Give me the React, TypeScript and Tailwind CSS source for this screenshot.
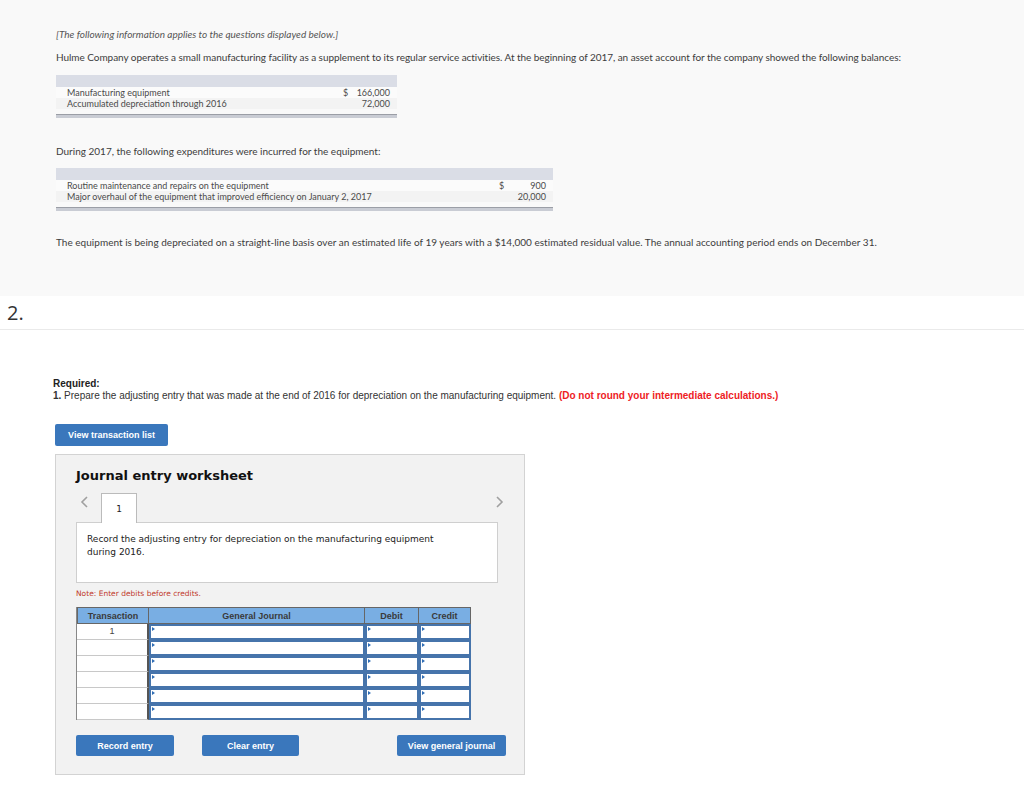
import React from "react";

type Row = { label: string; dollar?: boolean; amount: string };

function InfoTable({ rows, width }: { rows: Row[]; width: string }) {
  return (
    <div className={width}>
      <div className="h-[12px] bg-[#dadde6]" />
      {rows.map((r, i) => (
        <div
          key={r.label}
          className={`flex h-[11px] items-center pl-[11px] pr-[7px] text-[9px] leading-none text-[#4a4a4a] ${
            i % 2 === 0 ? "bg-[#fbfbfb]" : "bg-[#f3f3f3]"
          }`}
        >
          <span className="flex-1">{r.label}</span>
          <span className="w-[10px]">{r.dollar ? "$" : ""}</span>
          <span className="w-[37px] text-right">{r.amount}</span>
        </div>
      ))}
      <div className="mt-[5px] h-[4px] border-t border-[#9b9ea6] bg-[#c9ccd4]" />
    </div>
  );
}

function Tick() {
  return (
    <span className="absolute left-[1px] top-[1px] h-0 w-0 border-y-[2px] border-l-[3px] border-y-transparent border-l-[#2f6db5]" />
  );
}

function InputCell() {
  return (
    <div className="relative h-full border-2 border-[#4674ab] bg-white">
      <Tick />
    </div>
  );
}

function Chevron({ dir }: { dir: "left" | "right" }) {
  return (
    <svg width="9" height="12" viewBox="0 0 9 12" fill="none" stroke="#a0a0a0" strokeWidth="1.6">
      {dir === "left" ? <path d="M7 1 L2 6 L7 11" /> : <path d="M2 1 L7 6 L2 11" />}
    </svg>
  );
}

export default function App() {
  const rows = [1, 2, 3, 4, 5, 6];
  return (
    <div className="min-h-[797px] bg-white">
      <div className="h-[296px] bg-[#f9f9f9] px-[56px] pt-[28px] font-['Lato',sans-serif] text-[#3c3c3c]">
        <p className="text-[10px] italic leading-[12px] text-[#555]">
          [The following information applies to the questions displayed below.]
        </p>
        <p className="mt-[11px] text-[10px] leading-[12px] tracking-[-0.05px]">
          Hulme Company operates a small manufacturing facility as a supplement to its regular service activities. At the
          beginning of 2017, an asset account for the company showed the following balances:
        </p>
        <div className="mt-[12px]">
          <InfoTable
            width="w-[341px]"
            rows={[
              { label: "Manufacturing equipment", dollar: true, amount: "166,000" },
              { label: "Accumulated depreciation through 2016", amount: "72,000" },
            ]}
          />
        </div>
        <p className="mt-[27px] text-[10px] leading-[12px]">During 2017, the following expenditures were incurred for the equipment:</p>
        <div className="mt-[11px]">
          <InfoTable
            width="w-[497px]"
            rows={[
              { label: "Routine maintenance and repairs on the equipment", dollar: true, amount: "900" },
              { label: "Major overhaul of the equipment that improved efficiency on January 2, 2017", amount: "20,000" },
            ]}
          />
        </div>
        <p className="mt-[25px] text-[10px] leading-[12px] tracking-[0.02px]">
          The equipment is being depreciated on a straight-line basis over an estimated life of 19 years with a $14,000
          estimated residual value. The annual accounting period ends on December 31.
        </p>
      </div>

      <div className="flex h-[34px] items-center border-b border-[#eaeaea] pl-[7px] font-['Open_Sans',sans-serif] text-[20px] text-[#333]">
        2.
      </div>

      <div className="pl-[53px] pt-[48px] font-['Liberation_Sans',Arial,sans-serif] text-[10px] leading-[12px] text-[#333]">
        <p className="font-bold text-[#222]">Required:</p>
        <p>
          <span className="font-bold">1.</span> Prepare the adjusting entry that was made at the end of 2016 for depreciation
          on the manufacturing equipment.{" "}
          <span className="font-bold text-[#ee1c25]">(Do not round your intermediate calculations.)</span>
        </p>

        <button className="mt-[22px] ml-[2px] flex h-[22px] w-[113px] items-center justify-center rounded-[2px] bg-[#3a77bc] text-[9px] font-bold text-white">
          View transaction list
        </button>

        <div className="ml-[2px] mt-[8px] h-[321px] w-[470px] border border-[#d3d3d3] bg-[#f2f2f2] pl-[20px] pt-[12px]">
          <h2 className="font-['DejaVu_Sans',Verdana,sans-serif] text-[13px] font-bold leading-[18px] text-[#111]">
            Journal entry worksheet
          </h2>

          <div className="mt-[8px] flex h-[29px] w-[421px] items-end">
            <span className="mb-[14px] ml-[4px] w-[21px]">
              <Chevron dir="left" />
            </span>
            <div className="relative z-10 -mb-px flex h-[30px] w-[36px] items-center justify-center border border-b-0 border-[#bbb] bg-white font-['DejaVu_Sans',sans-serif] text-[9px] text-[#222]">
              1
            </div>
            <span className="mb-[14px] ml-auto mr-[-7px]">
              <Chevron dir="right" />
            </span>
          </div>

          <div className="h-[61px] w-[422px] border border-[#cfcfcf] bg-white px-[10px] pt-[10px] font-['DejaVu_Sans',Verdana,sans-serif] text-[9px] leading-[13px] text-[#222]">
            Record the adjusting entry for depreciation on the manufacturing equipment
            <br />
            during 2016.
          </div>

          <p className="mt-[5px] font-['DejaVu_Sans',Verdana,sans-serif] text-[7.5px] leading-[12px] text-[#c0392b]">
            Note: Enter debits before credits.
          </p>

          <div className="mt-[7px] w-[395px] border-l border-[#888]">
            <div className="grid h-[17px] grid-cols-[72px_216px_54px_52px] bg-[#79aee3] text-[9px] font-bold text-[#3a3a3a]">
              <div className="flex items-center justify-center border border-[#666]">Transaction</div>
              <div className="flex items-center justify-center border-y border-r border-[#666]">General Journal</div>
              <div className="flex items-center justify-center border-y border-r border-[#666]">Debit</div>
              <div className="flex items-center justify-center border-y border-r border-[#666]">Credit</div>
            </div>
            {rows.map((n) => (
              <div key={n} className="grid h-[16px] grid-cols-[72px_216px_54px_52px]">
                <div className="flex items-start justify-center border-b border-r-2 border-[#c8c8c8] border-r-[#555] bg-white pt-[1px] text-[9px] text-[#444]">
                  {n === 1 ? "1" : ""}
                </div>
                <InputCell />
                <InputCell />
                <InputCell />
              </div>
            ))}
          </div>

          <div className="mt-[15px] flex w-[430px] items-center">
            <button className="flex h-[21px] w-[98px] items-center justify-center rounded-[2px] bg-[#3a77bc] text-[9px] font-bold text-white">
              Record entry
            </button>
            <button className="ml-[28px] flex h-[21px] w-[97px] items-center justify-center rounded-[2px] bg-[#3a77bc] text-[9px] font-bold text-white">
              Clear entry
            </button>
            <button className="ml-auto flex h-[21px] w-[109px] items-center justify-center rounded-[2px] bg-[#3a77bc] text-[9px] font-bold text-white">
              View general journal
            </button>
          </div>
        </div>
      </div>
    </div>
  );
}
